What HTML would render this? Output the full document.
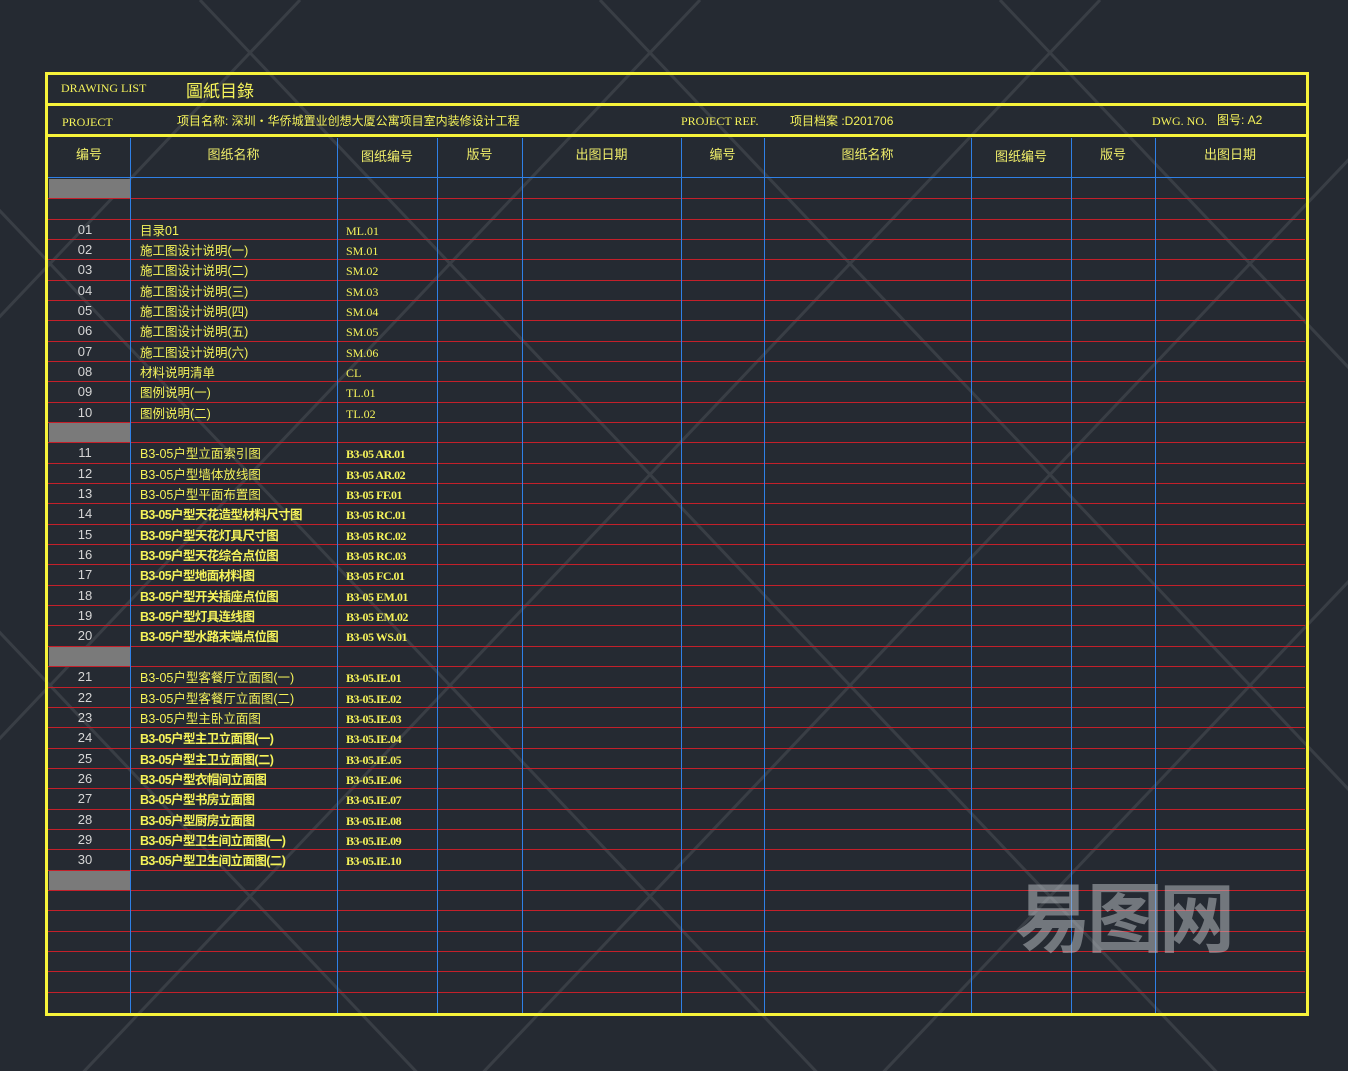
<!DOCTYPE html>
<html><head><meta charset="utf-8"><style>
*{margin:0;padding:0;box-sizing:border-box}
html,body{width:1348px;height:1071px;overflow:hidden}
body{background:#252a32;position:relative;font-family:"Liberation Serif","Noto Serif CJK SC","Noto Sans CJK SC",serif}
.a{position:absolute;white-space:nowrap}
.y{color:#f5f35a}
.w{color:#d6d6d6}
.hl{position:absolute;height:1px;background:#c4202a;left:48px;width:1257px;z-index:2}
.vl{position:absolute;width:1px;background:#2f80e6;top:138px;height:875px;z-index:3}
.t{font-size:13px;line-height:20px;z-index:4}
.h{font-family:"Liberation Sans","Noto Sans CJK SC",sans-serif;font-size:13px;color:#f0ee6a}
</style></head><body>
<svg class="a" style="left:0;top:0" width="1348" height="1071">
<g stroke="#bfc3c8" stroke-width="3" opacity="0.13">
<line x1="-200" y1="0" x2="900" y2="1160"/>
<line x1="200" y1="0" x2="1300" y2="1160"/>
<line x1="600" y1="0" x2="1700" y2="1160"/>
<line x1="1000" y1="0" x2="2100" y2="1160"/>
<line x1="-600" y1="0" x2="500" y2="1160"/>
<line x1="300" y1="0" x2="-800" y2="1160"/>
<line x1="700" y1="0" x2="-400" y2="1160"/>
<line x1="1100" y1="0" x2="0" y2="1160"/>
<line x1="1500" y1="0" x2="400" y2="1160"/>
<line x1="1900" y1="0" x2="800" y2="1160"/>
</g></svg>
<div class="a" style="left:45px;top:72px;width:1264px;height:944px;border:3px solid #f7f33a;z-index:5"></div>
<div class="a" style="left:45px;top:103px;width:1264px;height:3px;background:#f7f33a"></div>
<div class="a" style="left:45px;top:134px;width:1264px;height:3px;background:#f7f33a"></div>
<div class="a y" style="left:61px;top:81px;font-size:12px">DRAWING LIST</div>
<div class="a y" style="left:186px;top:77px;font-size:17px;font-family:'Liberation Sans','Noto Sans CJK SC',sans-serif">圖紙目錄</div>
<div class="a y" style="left:62px;top:115px;font-size:12px">PROJECT</div>
<div class="a y" style="left:177px;top:112px;font-size:12px;font-family:'Liberation Sans','Noto Sans CJK SC',sans-serif">项目名称: 深圳・华侨城置业创想大厦公寓项目室内装修设计工程</div>
<div class="a y" style="left:681px;top:114px;font-size:12px">PROJECT REF.</div>
<div class="a y" style="left:790px;top:112px;font-size:12px;font-family:'Liberation Sans','Noto Sans CJK SC',sans-serif">项目档案 :D201706</div>
<div class="a y" style="left:1152px;top:114px;font-size:12px">DWG. NO.</div>
<div class="a y" style="left:1217px;top:111px;font-size:12px;font-family:'Liberation Sans','Noto Sans CJK SC',sans-serif">图号: A2</div>
<div class="a" style="left:48px;top:177px;width:1257px;height:1px;background:#2f80e6;z-index:3"></div>
<div id="rows"></div>
<script>
var vx=[130,337,437,522,681,764,971,1071,1155];
var h='';
vx.forEach(function(x){h+='<div class="vl" style="left:'+x+'px"></div>'});
var hd=[[48,130,'编号'],[130,337,'图纸名称'],[337,437,'图纸编号'],[437,522,'版号'],[522,681,'出图日期'],[681,764,'编号'],[764,971,'图纸名称'],[971,1071,'图纸编号'],[1071,1155,'版号'],[1155,1305,'出图日期']];
hd.forEach(function(c,i){h+='<div class="a h" style="left:'+c[0]+'px;width:'+(c[1]-c[0])+'px;text-align:center;top:'+(i==2||i==7?146:144)+'px">'+c[2]+'</div>'});
var names=['目录01','施工图设计说明(一)','施工图设计说明(二)','施工图设计说明(三)','施工图设计说明(四)','施工图设计说明(五)','施工图设计说明(六)','材料说明清单','图例说明(一)','图例说明(二)',
'B3-05户型立面索引图','B3-05户型墙体放线图','B3-05户型平面布置图','B3-05户型天花造型材料尺寸图','B3-05户型天花灯具尺寸图','B3-05户型天花综合点位图','B3-05户型地面材料图','B3-05户型开关插座点位图','B3-05户型灯具连线图','B3-05户型水路末端点位图',
'B3-05户型客餐厅立面图(一)','B3-05户型客餐厅立面图(二)','B3-05户型主卧立面图','B3-05户型主卫立面图(一)','B3-05户型主卫立面图(二)','B3-05户型衣帽间立面图','B3-05户型书房立面图','B3-05户型厨房立面图','B3-05户型卫生间立面图(一)','B3-05户型卫生间立面图(二)'];
var codes=['ML.01','SM.01','SM.02','SM.03','SM.04','SM.05','SM.06','CL','TL.01','TL.02',
'B3-05 AR.01','B3-05 AR.02','B3-05 FF.01','B3-05 RC.01','B3-05 RC.02','B3-05 RC.03','B3-05 FC.01','B3-05 EM.01','B3-05 EM.02','B3-05 WS.01',
'B3-05.IE.01','B3-05.IE.02','B3-05.IE.03','B3-05.IE.04','B3-05.IE.05','B3-05.IE.06','B3-05.IE.07','B3-05.IE.08','B3-05.IE.09','B3-05.IE.10'];
var top0=178,rh=20.34;
var map={};
for(var i=0;i<10;i++){map[2+i]=i;map[13+i]=10+i;map[24+i]=20+i;}
for(var r=0;r<41;r++){
 var y=top0+r*rh;
 if(r>0)h+='<div class="hl" style="top:'+Math.round(y)+'px"></div>';
 if(r==0||r==12||r==23||r==34)h+='<div class="a" style="left:49px;top:'+Math.round(y+1)+'px;width:81px;height:'+Math.round(rh-1)+'px;background:#7a7a7a;z-index:2"></div>';
 if(map[r]!==undefined){var k=map[r];var n=(k+1<10?'0':'')+(k+1);
  var bold=(k>=13&&k<20)||k>=23;
  h+='<div class="a t w" style="left:48px;width:74px;text-align:center;top:'+Math.round(y+1)+'px;font-family:\'Liberation Sans\',sans-serif">'+n+'</div>';
  h+='<div class="a t y" style="left:140px;top:'+Math.round(y+2)+'px;font-family:\'Liberation Sans\',\'Noto Sans CJK SC\',sans-serif;font-size:12.5px;'+(bold?'font-weight:bold;letter-spacing:-0.6px':'')+'">'+names[k]+'</div>';
  h+='<div class="a t y" style="left:346px;top:'+Math.round(y+2)+'px;font-size:12px;'+(k>=10?'font-weight:bold;letter-spacing:-0.5px':'')+'">'+codes[k]+'</div>';
 }
}
document.getElementById('rows').innerHTML=h;
</script>
<div class="a" style="left:1015px;top:868px;height:90px;line-height:90px;font-size:76px;font-weight:bold;color:#bfc3c8;opacity:0.5;font-family:'Noto Sans CJK SC',sans-serif;letter-spacing:-4px;z-index:6">易图网</div>
</body></html>
